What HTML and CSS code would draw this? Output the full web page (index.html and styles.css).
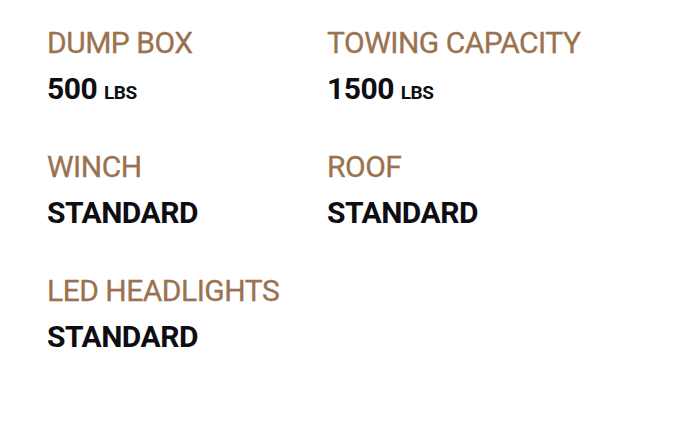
FILE: index.html
```html
<!DOCTYPE html>
<html>
<head>
<meta charset="utf-8">
<link rel="stylesheet" href="styles.css">
</head>
<body>
<div class="specs">
  <div class="spec">
    <div class="label">DUMP BOX</div>
    <div class="value">500 <span class="unit">LBS</span></div>
  </div>
  <div class="spec">
    <div class="label">TOWING CAPACITY</div>
    <div class="value">1500 <span class="unit">LBS</span></div>
  </div>
  <div class="spec">
    <div class="label">WINCH</div>
    <div class="value">STANDARD</div>
  </div>
  <div class="spec">
    <div class="label">ROOF</div>
    <div class="value">STANDARD</div>
  </div>
  <div class="spec">
    <div class="label">LED HEADLIGHTS</div>
    <div class="value">STANDARD</div>
  </div>
</div>
</body>
</html>
```

FILE: styles.css
```css
html, body {
  margin: 0;
  background: #ffffff;
}
.specs {
  display: grid;
  grid-template-columns: 280px 280px;
  row-gap: 42px;
  padding: 25px 0 0 47px;
  font-family: Roboto, "Liberation Sans", sans-serif;
}
.spec {
  display: flex;
  flex-direction: column;
  gap: 10px;
}
.label {
  color: #9a7250;
  font-size: 30px;
  line-height: 36px;
  letter-spacing: -0.5px;
  -webkit-text-stroke: 0.3px #9a7250;
}
.value {
  color: #0d0d12;
  font-size: 30px;
  line-height: 36px;
  font-weight: 700;
  letter-spacing: -0.5px;
}
.unit {
  font-size: 19px;
  line-height: 0;
}
```
